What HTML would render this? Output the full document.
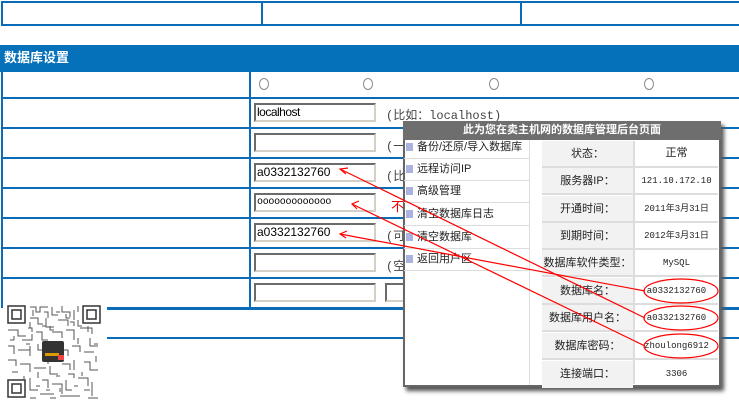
<!DOCTYPE html>
<html><head><meta charset="utf-8"><style>
*{margin:0;padding:0;box-sizing:border-box}
body{width:739px;height:405px;background:#fff;position:relative;overflow:hidden;font-family:"Liberation Sans","Noto Sans CJK SC",sans-serif;font-size:12px;color:#333}
.a{position:absolute}
.h{position:absolute;height:2px;background:#0a6cb8}
.v{position:absolute;width:2px;background:#0a6cb8}
.in{position:absolute;width:122px;height:19px;border:2px solid #6b6b6b;border-right-color:#d4d0c8;border-bottom-color:#d4d0c8;background:#fff;font-family:"Liberation Mono",monospace;font-size:12px;color:#000;line-height:15px;padding-left:1px}
.rd{position:absolute;width:10px;height:12px;border:1px solid #888;border-radius:50%;top:78px}
.note{position:absolute;left:386px;font-family:"Liberation Mono","Noto Sans CJK SC",monospace;font-size:12px;color:#444}
.mi{position:absolute;left:404px;width:126px;height:22px;border-bottom:1px solid #ddd;font-size:11px;color:#222;padding-left:13px;line-height:20px}
.mi:before{content:"";position:absolute;left:2px;top:6px;width:7px;height:8px;background:#aab3e0}
.lb{position:absolute;left:542px;width:91px;height:27px;background:#f2f2f2;border-bottom:2px solid #ddd;font-size:11px;text-align:center;line-height:26px;color:#222}
.vl{position:absolute;left:635px;width:83px;height:27px;border-bottom:2px solid #ddd;font-size:9px;text-align:center;line-height:26px;color:#222;font-family:"Liberation Mono","Noto Sans CJK SC",monospace}
</style></head><body>
<div class="h" style="left:1px;top:1px;width:738px"></div>
<div class="h" style="left:1px;top:24px;width:738px"></div>
<div class="v" style="left:1px;top:1px;height:25px"></div>
<div class="v" style="left:261px;top:1px;height:25px"></div>
<div class="v" style="left:520px;top:1px;height:25px"></div>
<div class="a" style="left:0;top:45px;width:739px;height:27px;background:#0571ba;color:#fff;font-weight:bold;font-size:13px;line-height:26px;padding-left:4px">数据库设置</div>
<div class="v" style="left:1px;top:72px;height:236px"></div>
<div class="v" style="left:249px;top:72px;height:236px"></div>
<div class="h" style="left:1px;top:97px;width:738px"></div>
<div class="h" style="left:1px;top:127px;width:738px"></div>
<div class="h" style="left:1px;top:157px;width:738px"></div>
<div class="h" style="left:1px;top:187px;width:738px"></div>
<div class="h" style="left:1px;top:217px;width:738px"></div>
<div class="h" style="left:1px;top:247px;width:738px"></div>
<div class="h" style="left:1px;top:277px;width:738px"></div>
<div class="h" style="left:107px;top:307px;width:632px;height:3px"></div>
<div class="h" style="left:107px;top:337px;width:632px"></div>
<div class="rd" style="left:259px"></div><div class="rd" style="left:363px"></div><div class="rd" style="left:489px"></div><div class="rd" style="left:644px"></div>
<div class="in" style="left:254px;top:103px;font-family:'Liberation Sans',sans-serif;letter-spacing:-0.5px">localhost</div>
<div class="note" style="top:106px">(比如：localhost)</div>
<div class="in" style="left:254px;top:133px"></div><div class="note" style="top:137px">(一</div>
<div class="in" style="left:254px;top:163px;font-family:'Liberation Sans',sans-serif">a0332132760</div><div class="note" style="top:167px">(比</div>
<div class="in" style="left:254px;top:193px;font-size:10px;letter-spacing:-0.3px">ooooooooooooo</div>
<div class="in" style="left:254px;top:223px;font-family:'Liberation Sans',sans-serif">a0332132760</div><div class="note" style="top:227px">(可</div>
<div class="in" style="left:254px;top:253px"></div><div class="note" style="top:257px">(空</div>
<div class="in" style="left:254px;top:283px"></div>
<div class="in" style="left:385px;top:283px;width:30px"></div>
<div class="a" style="left:391px;top:196px;color:#e00;font-size:13px">不</div>
<div class="a" style="left:403px;top:121px;width:318px;height:266px;background:#fff;border:2px solid #666;box-shadow:3px 4px 4px #555"></div>
<div class="a" style="left:403px;top:121px;width:318px;height:19px;background:#6e6e6e;color:#fff;font-weight:bold;font-size:11px;text-align:center;line-height:19px">此为您在卖主机网的数据库管理后台页面</div>
<div class="a" style="left:529px;top:140px;width:1px;height:245px;background:#ddd"></div>
<div class="mi" style="top:137px">备份/还原/导入数据库</div>
<div class="mi" style="top:159px">远程访问IP</div>
<div class="mi" style="top:181px">高级管理</div>
<div class="mi" style="top:204px">清空数据库日志</div>
<div class="mi" style="top:227px">清空数据库</div>
<div class="mi" style="top:249px">返回用户区</div>
<div class="a" style="left:633px;top:141px;width:2px;height:243px;background:#ddd"></div>
<div class="lb" style="top:141px">状态：</div><div class="vl" style="top:141px;font-size:11px">正常</div>
<div class="lb" style="top:168px">服务器IP：</div><div class="vl" style="top:168px">121.10.172.10</div>
<div class="lb" style="top:196px">开通时间：</div><div class="vl" style="top:196px">2011年3月31日</div>
<div class="lb" style="top:223px">到期时间：</div><div class="vl" style="top:223px">2012年3月31日</div>
<div class="lb" style="top:250px">数据库软件类型：</div><div class="vl" style="top:250px">MySQL</div>
<div class="lb" style="top:278px">数据库名：</div><div class="vl" style="top:278px">a0332132760</div>
<div class="lb" style="top:305px">数据库用户名：</div><div class="vl" style="top:305px">a0332132760</div>
<div class="lb" style="top:333px">数据库密码：</div><div class="vl" style="top:333px">zhoulong6912</div>
<div class="lb" style="top:361px;border:none">连接端口：</div><div class="vl" style="top:361px;border:none">3306</div>
<svg class="a" style="left:0;top:0" width="739" height="405">
<g stroke="#f00" stroke-width="1.2" fill="none">
<line x1="340" y1="169" x2="645" y2="318"/><line x1="352" y1="204" x2="645" y2="346"/><line x1="340" y1="234" x2="645" y2="291"/>
<polyline points="348,168 340,169 346,174"/><polyline points="359,201 352,204 357,209"/><polyline points="347,231 340,234 346,238"/>
<ellipse cx="681" cy="291" rx="37" ry="12"/><ellipse cx="681" cy="318" rx="37" ry="12"/><ellipse cx="681" cy="346" rx="37" ry="12"/>
</g>
<g fill="none" stroke="#333" stroke-width="1.5">
<rect x="8" y="306" width="17" height="17"/><rect x="12" y="310" width="9" height="9"/>
<rect x="83" y="306" width="17" height="17"/><rect x="87" y="310" width="9" height="9"/>
<rect x="8" y="380" width="17" height="17"/><rect x="12" y="384" width="9" height="9"/>
</g>
<g stroke="#555" stroke-width="1" fill="none">
<path d="M30 307h6v5h4v-5h8M52 307v8h6M62 306v6h8v5M30 318h8v6h5M46 318v9h8M58 320h10v6M74 310v10M8 330h10v6h8M22 340h10v-6M36 332h6v8h6M52 332h10v6M66 330h8v10M80 328h12v6M90 338v8h8M8 346h6v8M18 350h12M30 346v10M60 350h8v6M72 346h8v6M84 352h10M8 360h8v6M20 364h10v8M34 368h12M50 366v8h8M62 364h8v6M74 360v10M84 362h6v8h8M30 378v12h8M42 380h6v8M52 384h10v10M66 380v10h6M78 378h10v8M92 382v14M40 394h14M60 396h20M30 322v6M88 326v6"/>
<path d="M33 310v6M44 312h4v6M56 312h4M66 314v4h4M78 306v6M28 328h4v4M42 326h4M50 326v4h4M70 322h4v4M78 320v6h4M10 340h4M14 336v4M26 344h4M38 344v6h4M48 346v6M54 344h4M78 338v6M94 344h4M12 372h6M24 376v4M38 372v6M44 360h4v4M56 376h4M68 374h6v4M82 372v4M96 356v6M36 386h4M46 390h4M60 388v4M74 386h4M84 390h6M88 398h10M30 398h6M50 398h6"/>
</g>
<rect x="42" y="341" width="22" height="21" rx="2" fill="#333"/>
<rect x="45" y="353" width="14" height="3" fill="#d90"/><rect x="58" y="355" width="6" height="5" fill="#e44"/>
</svg>
</body></html>
